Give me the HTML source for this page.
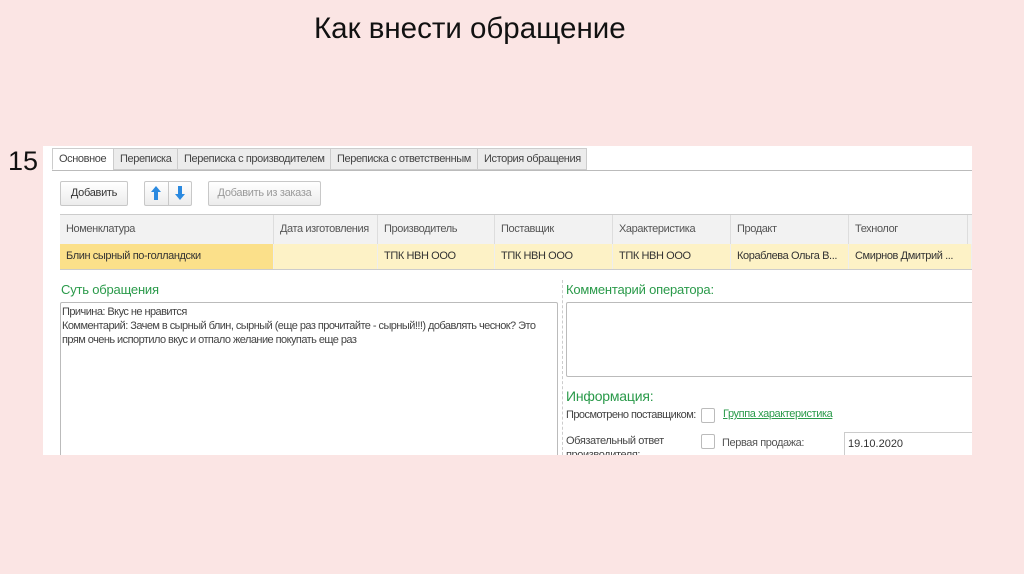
<!DOCTYPE html><html><head><meta charset="utf-8"><style>
body{margin:0;width:1024px;height:574px;background:#fbe5e4;font-family:"Liberation Sans",sans-serif;position:relative;overflow:hidden}
.a{position:absolute}
.s{font-size:11px;color:#444;white-space:nowrap;letter-spacing:-0.4px}
.tab{position:absolute;top:148px;height:22px;background:#ececec;border:1px solid #ccc;box-sizing:border-box;font-size:11px;color:#444;line-height:21px;padding-left:6px;letter-spacing:-0.4px}
.btn{position:absolute;background:linear-gradient(#fff,#ececec);border:1px solid #c8c8c8;border-radius:2px;box-sizing:border-box;font-size:11px;color:#333;line-height:23px;text-align:center;letter-spacing:-0.3px}
.h{position:absolute;top:215px;height:29px;background:#f2f2f2;border-right:1px solid #ddd;box-sizing:border-box;font-size:11px;color:#555;line-height:28px;padding-left:6px;letter-spacing:-0.4px}
.r{position:absolute;top:244px;height:25px;background:#fdf2c6;border-right:1px solid #eee;box-sizing:border-box;font-size:11px;color:#333;line-height:25px;padding-left:6px;white-space:nowrap;overflow:hidden;letter-spacing:-0.4px}
.g{color:#2a9a4a;font-size:13px;position:absolute;letter-spacing:-0.2px}
</style></head><body>
<div class="a" style="left:314px;top:12px;font-size:29.5px;color:#111">Как внести обращение</div>
<div class="a" style="left:8px;top:146px;font-size:27px;color:#111">15</div>
<div class="a" style="left:43px;top:146px;width:929px;height:309px;background:#fff"></div>
<div class="a" style="left:52px;top:170px;width:920px;height:1px;background:#bbb"></div>
<div class="tab" style="left:52px;width:62px;background:#fff;border-bottom-color:#fff">Основное</div>
<div class="tab" style="left:113px;width:65px">Переписка</div>
<div class="tab" style="left:177px;width:154px">Переписка с производителем</div>
<div class="tab" style="left:330px;width:148px">Переписка с ответственным</div>
<div class="tab" style="left:477px;width:110px">История обращения</div>
<div class="btn" style="left:60px;top:181px;width:68px;height:25px">Добавить</div>
<div class="btn" style="left:144px;top:181px;width:48px;height:25px"></div>
<div class="a" style="left:168px;top:182px;width:1px;height:23px;background:#c8c8c8"></div>
<svg class="a" style="left:150px;top:185px" width="12" height="16" viewBox="0 0 12 16"><path d="M6 1 L11 7 H8 V15 H4 V7 H1 Z" fill="#2b8ae0"/></svg>
<svg class="a" style="left:174px;top:185px" width="12" height="16" viewBox="0 0 12 16"><path d="M6 15 L11 9 H8 V1 H4 V9 H1 Z" fill="#2b8ae0"/></svg>
<div class="btn" style="left:208px;top:181px;width:113px;height:25px;color:#999">Добавить из заказа</div>
<div class="a" style="left:60px;top:214px;width:912px;height:56px;border:1px solid #ccc;box-sizing:border-box"></div>
<div class="h" style="left:60px;width:214px">Номенклатура</div>
<div class="h" style="left:274px;width:104px">Дата изготовления</div>
<div class="h" style="left:378px;width:117px">Производитель</div>
<div class="h" style="left:495px;width:118px">Поставщик</div>
<div class="h" style="left:613px;width:118px">Характеристика</div>
<div class="h" style="left:731px;width:118px">Продакт</div>
<div class="h" style="left:849px;width:119px">Технолог</div>
<div class="h" style="left:968px;width:4px"></div>
<div class="r" style="left:60px;width:214px;background:#fbe08a">Блин сырный по-голландски</div>
<div class="r" style="left:274px;width:104px"></div>
<div class="r" style="left:378px;width:117px">ТПК НВН ООО</div>
<div class="r" style="left:495px;width:118px">ТПК НВН ООО</div>
<div class="r" style="left:613px;width:118px">ТПК НВН ООО</div>
<div class="r" style="left:731px;width:118px">Кораблева Ольга В...</div>
<div class="r" style="left:849px;width:123px">Смирнов Дмитрий ...</div>
<div class="g" style="left:61px;top:282px">Суть обращения</div>
<div class="a" style="left:60px;top:302px;width:498px;height:160px;border:1px solid #bbb;box-sizing:border-box;border-radius:2px"></div>
<div class="s a" style="left:62px;top:305px;line-height:14px;white-space:normal;width:494px;letter-spacing:-0.55px">Причина: Вкус не нравится<br>Комментарий: Зачем в сырный блин, сырный (еще раз прочитайте - сырный!!!) добавлять чеснок? Это прям очень испортило вкус и отпало желание покупать еще раз</div>
<div class="a" style="left:562px;top:280px;height:175px;border-left:1px dashed #ccc"></div>
<div class="g" style="left:566px;top:282px">Комментарий оператора:</div>
<div class="a" style="left:566px;top:302px;width:410px;height:75px;border:1px solid #bbb;box-sizing:border-box;border-radius:2px"></div>
<div class="g" style="left:566px;top:388px;font-size:14px">Информация:</div>
<div class="s a" style="left:566px;top:409px;letter-spacing:-0.55px">Просмотрено поставщиком:</div>
<div class="a" style="left:701px;top:408px;width:12px;height:13px;border:1px solid #bbb;border-radius:2px;background:#fff"></div>
<div class="a" style="left:723px;top:408px;font-size:11px;color:#2a9a4a;text-decoration:underline;letter-spacing:-0.4px">Группа характеристика</div>
<div class="s a" style="left:566px;top:435px">Обязательный ответ</div>
<div class="s a" style="left:566px;top:449px;height:6px;overflow:hidden">производителя:</div>
<div class="a" style="left:701px;top:434px;width:12px;height:13px;border:1px solid #bbb;border-radius:2px"></div>
<div class="s a" style="left:722px;top:437px;color:#555">Первая продажа:</div>
<div class="a" style="left:844px;top:432px;width:130px;height:24px;border:1px solid #ccc;box-sizing:border-box;font-size:11px;color:#333;line-height:22px;padding-left:3px">19.10.2020</div>
<div class="a" style="left:43px;top:455px;width:981px;height:119px;background:#fbe5e4"></div>
<div class="a" style="left:972px;top:140px;width:52px;height:320px;background:#fbe5e4"></div>
</body></html>
